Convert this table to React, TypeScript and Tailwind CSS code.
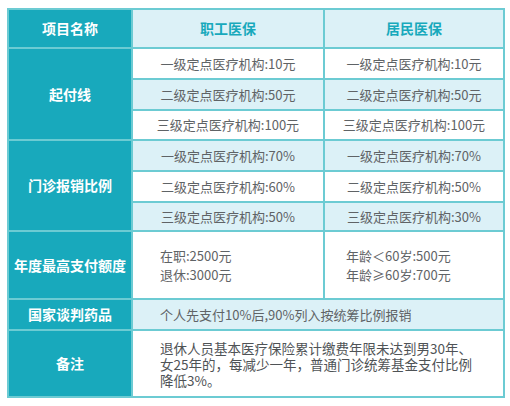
import React from 'react';

const rowsA = [
  ['一级定点医疗机构:10元', '一级定点医疗机构:10元'],
  ['二级定点医疗机构:50元', '二级定点医疗机构:50元'],
  ['三级定点医疗机构:100元', '三级定点医疗机构:100元'],
];

const rowsB = [
  ['一级定点医疗机构:70%', '一级定点医疗机构:70%'],
  ['二级定点医疗机构:60%', '二级定点医疗机构:50%'],
  ['三级定点医疗机构:50%', '三级定点医疗机构:30%'],
];

const head = 'flex items-center justify-center bg-[#18a9bc] text-white font-bold text-[14px]';
const cell = 'flex items-center justify-center text-[13px] text-[#5f6366]';

export default function App() {
  return (
    <div
      className="w-[510px] h-[406px] bg-white pt-[8px] pl-[7px]"
      style={{ fontFamily: '"Noto Sans CJK SC", "Noto Sans", sans-serif' }}
    >
      <div className="grid w-[498px] grid-cols-[122px_190px_178px] grid-rows-[37px_29px_29px_28px_29px_29px_27px_66px_29px_65px] gap-[2px] bg-[#6ccbd3] p-[2px]">
        <div className={head}>项目名称</div>
        <div className="flex items-center justify-center bg-[#dcf1f7] text-[14px] font-bold text-[#18a9bc]">职工医保</div>
        <div className="flex items-center justify-center bg-[#dcf1f7] text-[14px] font-bold text-[#18a9bc]">居民医保</div>

        <div className={`${head} row-span-3`}>起付线</div>
        {rowsA.map((r, i) => (
          <React.Fragment key={i}>
            <div className={`${cell} ${i === 1 ? 'bg-[#dcf1f7]' : 'bg-white'}`}>{r[0]}</div>
            <div className={`${cell} ${i === 1 ? 'bg-[#dcf1f7]' : 'bg-white'}`}>{r[1]}</div>
          </React.Fragment>
        ))}

        <div className={`${head} row-span-3`}>门诊报销比例</div>
        {rowsB.map((r, i) => (
          <React.Fragment key={i}>
            <div className={`${cell} ${i === 1 ? 'bg-white' : 'bg-[#dcf1f7]'}`}>{r[0]}</div>
            <div className={`${cell} ${i === 1 ? 'bg-white' : 'bg-[#dcf1f7]'}`}>{r[1]}</div>
          </React.Fragment>
        ))}

        <div className={head}>年度最高支付额度</div>
        <div className="flex flex-col justify-center bg-white pl-[27px] text-[13px] leading-[19px] text-[#5f6366]">
          <span>在职:2500元</span>
          <span>退休:3000元</span>
        </div>
        <div className="flex flex-col justify-center bg-white pl-[21px] text-[13px] leading-[19px] text-[#5f6366]">
          <span>年龄＜60岁:500元</span>
          <span>年龄≥60岁:700元</span>
        </div>

        <div className={head}>国家谈判药品</div>
        <div className="col-span-2 flex items-center bg-[#dcf1f7] pl-[27px] text-[13px] text-[#5f6366]">
          个人先支付10%后,90%列入按统筹比例报销
        </div>

        <div className={head}>备注</div>
        <div className="col-span-2 flex items-center bg-white pl-[27px] text-[13.5px] leading-[16px] text-[#4f5356]">
          <p>
            退休人员基本医疗保险累计缴费年限未达到男30年、
            <br />
            女25年的，每减少一年，普通门诊统筹基金支付比例
            <br />
            降低3%。
          </p>
        </div>
      </div>
    </div>
  );
}
